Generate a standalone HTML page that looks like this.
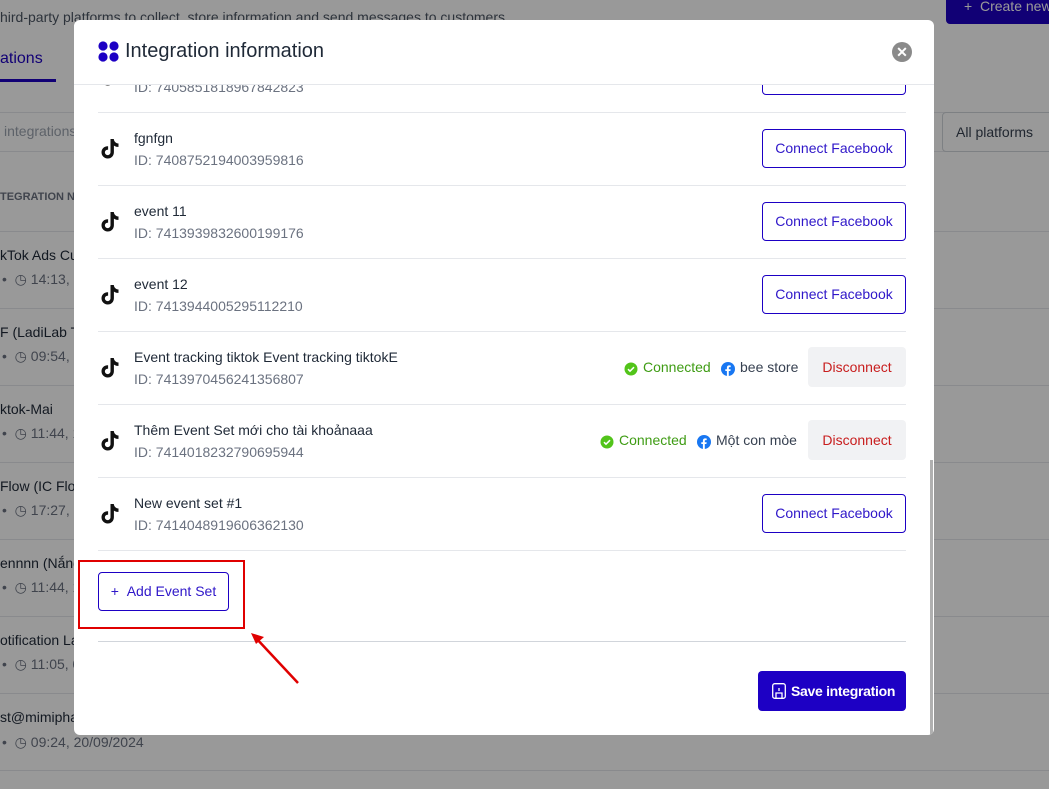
<!DOCTYPE html>
<html><head><meta charset="utf-8"><style>
body{margin:0;width:1049px;height:789px;overflow:hidden;font-family:"Liberation Sans","Noto Sans CJK JP",sans-serif;background:#fff;position:relative}
.a{position:absolute}
.bg{color:#1f2937;font-size:14px}
.ov{position:absolute;left:0;top:0;width:1049px;height:789px;background:rgba(0,0,0,0.4)}
.modal{position:absolute;left:74px;top:20px;width:860px;height:715px;background:#fff;border-radius:6px;overflow:hidden}
.row{position:absolute;left:24px;width:808px;height:73px;border-bottom:1px solid #e5e7eb}
.nm{position:absolute;left:36px;top:18px;font-size:14px;color:#1f2937}
.id{position:absolute;left:36px;top:40px;font-size:14px;color:#6b7280}
.tk{position:absolute;left:0;top:25px}
.cf{position:absolute;right:0;top:17px;width:142px;height:37px;border:1px solid #1d00c4;border-radius:4px;color:#2f17c9;font-size:14px;text-align:center;line-height:37px}
.dc{position:absolute;right:0;top:16px;width:98px;height:40px;background:#f1f2f4;border-radius:4px;color:#c81e1e;font-size:14px;text-align:center;line-height:40px}
.cn{position:absolute;top:28px;font-size:14px;color:#3f9c14}
.fb{position:absolute;top:28px;font-size:14px;color:#374151}
</style></head><body>
<div class="a bg" style="left:0;top:9px;color:#4b5563">hird-party platforms to collect, store information and send messages to customers.</div>
<div class="a" style="left:946px;top:-6px;width:110px;height:30px;background:#1d00c4;border-radius:4px;color:#fff;font-size:14px;line-height:24px;padding-left:18px">+&nbsp;&nbsp;Create new</div>
<div class="a" style="left:0;top:50px;font-size:16px;color:#1d00c4">ations</div>
<div class="a" style="left:0;top:79px;width:56px;height:3px;background:#1d00c4"></div>
<div class="a" style="left:0;top:112px;width:1049px;height:1px;background:#e5e7eb"></div>
<div class="a" style="left:0;top:151px;width:1049px;height:1px;background:#e5e7eb"></div>
<div class="a" style="left:4px;top:123px;font-size:14px;color:#9ca3af">integrations</div>
<div class="a" style="left:942px;top:112px;width:120px;height:38px;border:1px solid #d1d5db;border-radius:4px;font-size:14px;line-height:38px;padding-left:13px;color:#374151">All platforms</div>
<div class="a" style="left:0;top:191px;font-size:11px;color:#6b7280;font-weight:bold">TEGRATION NAME</div>
<div class="a bg" style="left:0;top:247px">kTok Ads Custom</div><div class="a bg" style="left:2px;top:271px;color:#6b7280">•&nbsp; ◷ 14:13, 20</div>
<div class="a bg" style="left:0;top:324px">F (LadiLab T</div><div class="a bg" style="left:2px;top:348px;color:#6b7280">•&nbsp; ◷ 09:54, 1</div>
<div class="a bg" style="left:0;top:401px">ktok-Mai</div><div class="a bg" style="left:2px;top:425px;color:#6b7280">•&nbsp; ◷ 11:44, 1</div>
<div class="a bg" style="left:0;top:478px">Flow (IC Flo</div><div class="a bg" style="left:2px;top:502px;color:#6b7280">•&nbsp; ◷ 17:27, 1</div>
<div class="a bg" style="left:0;top:555px">ennnn (Nắng</div><div class="a bg" style="left:2px;top:579px;color:#6b7280">•&nbsp; ◷ 11:44, 1</div>
<div class="a bg" style="left:0;top:632px">otification La</div><div class="a bg" style="left:2px;top:656px;color:#6b7280">•&nbsp; ◷ 11:05, 0</div>
<div class="a bg" style="left:0;top:709px">st@mimipha</div><div class="a bg" style="left:2px;top:734px;color:#6b7280">•&nbsp; ◷ 09:24, 20/09/2024</div>
<div class="a" style="left:0;top:231px;width:1049px;height:1px;background:#e5e7eb"></div>
<div class="a" style="left:0;top:308px;width:1049px;height:1px;background:#e5e7eb"></div>
<div class="a" style="left:0;top:385px;width:1049px;height:1px;background:#e5e7eb"></div>
<div class="a" style="left:0;top:462px;width:1049px;height:1px;background:#e5e7eb"></div>
<div class="a" style="left:0;top:539px;width:1049px;height:1px;background:#e5e7eb"></div>
<div class="a" style="left:0;top:616px;width:1049px;height:1px;background:#e5e7eb"></div>
<div class="a" style="left:0;top:693px;width:1049px;height:1px;background:#e5e7eb"></div>
<div class="a" style="left:0;top:770px;width:1049px;height:1px;background:#e5e7eb"></div>
<div class="ov"></div>

<svg width="0" height="0" style="position:absolute"><defs><symbol id="tt" viewBox="0 0 24 24"><path d="M12.5 2h3.3c.3 2.6 2 4.3 4.7 4.5v3.4c-1.7.1-3.2-.4-4.6-1.3v6.6c0 3.6-2.7 6.3-6.2 6.3S3.5 18.8 3.5 15.3s2.9-6.3 6.6-6v3.5c-1.6-.3-3.2.9-3.2 2.6 0 1.5 1.2 2.7 2.7 2.7 1.6 0 2.9-1.2 2.9-3V2z" fill="#111"/></symbol></defs></svg>

<div class="modal">
 <div class="a" style="left:24px;top:21px"><svg width="21" height="21" viewBox="0 0 21 21" fill="#1d00c4"><circle cx="5" cy="5" r="4.6"/><circle cx="16" cy="5" r="4.6"/><circle cx="5" cy="16" r="4.6"/><circle cx="16" cy="16" r="4.6"/></svg></div>
 <div class="a" style="left:51px;top:20px;font-size:20px;color:#1f2937">Integration information</div>
 <div class="a" style="left:818px;top:22px;width:20px;height:20px;border-radius:50%;background:#8a8a8a;color:#fff;font-size:14px;font-weight:bold;text-align:center;line-height:20px">✕</div>
 <div class="a" style="left:0;top:64px;width:860px;height:1px;background:#e5e7eb"></div>
 <div class="a" style="left:0;top:65px;width:860px;height:650px;overflow:hidden">
  <div class="row" style="top:-46px"><svg class="tk" width="24" height="24"><use href="#tt"/></svg><div class="id">ID: 7405851818967842823</div><div class="cf">Connect Facebook</div></div>
  <div class="row" style="top:27px"><svg class="tk" width="24" height="24"><use href="#tt"/></svg><div class="nm">fgnfgn</div><div class="id">ID: 7408752194003959816</div><div class="cf">Connect Facebook</div></div>
  <div class="row" style="top:100px"><svg class="tk" width="24" height="24"><use href="#tt"/></svg><div class="nm">event 11</div><div class="id">ID: 7413939832600199176</div><div class="cf">Connect Facebook</div></div>
  <div class="row" style="top:173px"><svg class="tk" width="24" height="24"><use href="#tt"/></svg><div class="nm">event 12</div><div class="id">ID: 7413944005295112210</div><div class="cf">Connect Facebook</div></div>
  <div class="row" style="top:246px"><svg class="tk" width="24" height="24"><use href="#tt"/></svg><div class="nm">Event tracking tiktok Event tracking tiktokE</div><div class="id">ID: 7413970456241356807</div>
   <svg class="a" style="left:526px;top:31px" width="14" height="14"><circle cx="7" cy="7" r="6.5" fill="#52c41a"/><path d="M4 7.2l2 2 4-4" stroke="#fff" stroke-width="1.5" fill="none"/></svg><div class="cn" style="left:545px">Connected</div>
   <svg class="a" style="left:623px;top:31px" width="14" height="14"><circle cx="7" cy="7" r="7" fill="#1877f2"/><path d="M7.8 14V9h1.6l.3-1.8H7.8V6c0-.5.2-.9.9-.9h1V3.5c-.3 0-.9-.1-1.5-.1-1.5 0-2.3.9-2.3 2.4v1.4H4.3V9h1.6v5z" fill="#fff"/></svg><div class="fb" style="left:642px">bee store</div>
   <div class="dc">Disconnect</div></div>
  <div class="row" style="top:319px"><svg class="tk" width="24" height="24"><use href="#tt"/></svg><div class="nm">Thêm Event Set mới cho tài khoảnaaa</div><div class="id">ID: 7414018232790695944</div>
   <svg class="a" style="left:502px;top:31px" width="14" height="14"><circle cx="7" cy="7" r="6.5" fill="#52c41a"/><path d="M4 7.2l2 2 4-4" stroke="#fff" stroke-width="1.5" fill="none"/></svg><div class="cn" style="left:521px">Connected</div>
   <svg class="a" style="left:599px;top:31px" width="14" height="14"><circle cx="7" cy="7" r="7" fill="#1877f2"/><path d="M7.8 14V9h1.6l.3-1.8H7.8V6c0-.5.2-.9.9-.9h1V3.5c-.3 0-.9-.1-1.5-.1-1.5 0-2.3.9-2.3 2.4v1.4H4.3V9h1.6v5z" fill="#fff"/></svg><div class="fb" style="left:618px">Một con mòe</div>
   <div class="dc">Disconnect</div></div>
  <div class="row" style="top:392px"><svg class="tk" width="24" height="24"><use href="#tt"/></svg><div class="nm">New event set #1</div><div class="id">ID: 7414048919606362130</div><div class="cf">Connect Facebook</div></div>
  <div class="a" style="left:24px;top:487px;width:129px;height:37px;border:1px solid #1d00c4;border-radius:4px;color:#2f17c9;font-size:14px;line-height:37px;text-align:center">+&nbsp;&nbsp;Add Event Set</div>
  <div class="a" style="left:4px;top:475px;width:163px;height:65px;border:2px solid #e00000"></div>
  <div class="a" style="left:24px;top:556px;width:808px;height:1px;background:#d1d5db"></div>
  <div class="a" style="left:684px;top:586px;width:148px;height:40px;background:#1d00c4;border-radius:4px;color:#fff;font-size:14px;font-weight:bold;line-height:40px">
   <svg class="a" style="left:14px;top:12px" width="14" height="16" viewBox="0 0 14 16"><rect x="0.7" y="0.7" width="12.6" height="14.6" rx="2" fill="none" stroke="#fff" stroke-width="1.3"/><path d="M4 15V10h6v5M7 5v3" stroke="#fff" stroke-width="1.3" fill="none"/></svg>
   <span style="position:absolute;left:33px;letter-spacing:-0.3px">Save integration</span></div>
 </div>
 <div class="a" style="left:856px;top:440px;width:3px;height:275px;background:#b0b0b0"></div>
</div>
<svg class="a" style="left:245px;top:628px" width="60" height="60"><path d="M53 55L10 9" stroke="#e00000" stroke-width="2.5"/><path d="M6 5l13 4-8 7z" fill="#e00000"/></svg>
</body></html>
